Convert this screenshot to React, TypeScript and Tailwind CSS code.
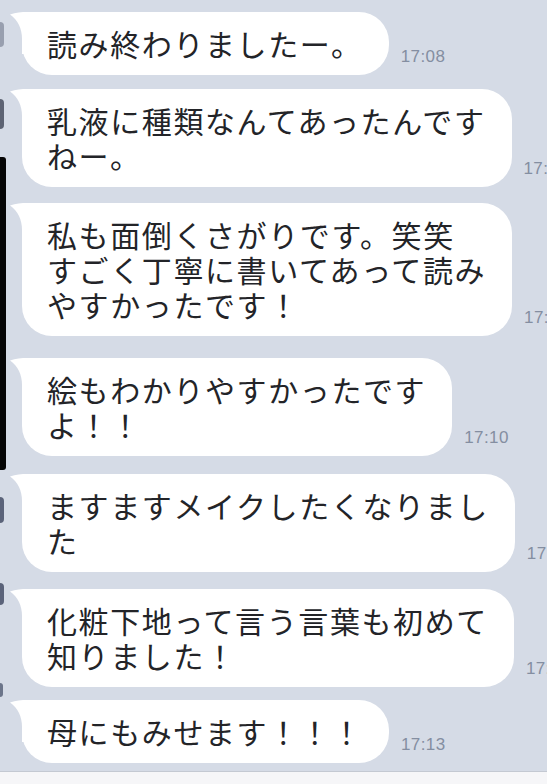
import React from "react";

type Message = {
  lines: string[];
  time: string;
  top: string;
};

const messages: Message[] = [
  { lines: ["読み終わりましたー。"], time: "17:08", top: "mt-0" },
  { lines: ["乳液に種類なんてあったんです", "ねー。"], time: "17:09", top: "mt-[14px]" },
  {
    lines: ["私も面倒くさがりです。笑笑", "すごく丁寧に書いてあって読み", "やすかったです！"],
    time: "17:09",
    top: "mt-[16px]",
  },
  { lines: ["絵もわかりやすかったです", "よ！！"], time: "17:10", top: "mt-[22px]" },
  { lines: ["ますますメイクしたくなりまし", "た"], time: "17:11", top: "mt-[18px]" },
  { lines: ["化粧下地って言う言葉も初めて", "知りました！"], time: "17:12", top: "mt-[17px]" },
  { lines: ["母にもみせます！！！"], time: "17:13", top: "mt-[13px]" },
];

// little horn at the top-left of each bubble
const Tail = () => (
  <svg
    className="absolute left-[-14px] top-[-2px] block"
    width="50"
    height="44"
    viewBox="0 0 50 44"
  >
    <path
      d="M2 4.5 C 8 2.4, 13 2, 20 2 L 50 2 L 50 44 L 14 44 L 14 29 C 14 19, 10 10, 2 4.5 Z"
      fill="#ffffff"
    />
  </svg>
);

const Bubble = ({ msg }: { msg: Message }) => {
  return (
    <div className={`${msg.top} flex items-end`}>
      <div className="relative shrink-0 rounded-[30px] bg-white py-[14px] pl-[25px] pr-[26px]">
        <Tail />
        <div className="relative whitespace-nowrap text-[30px] leading-[35px] tracking-[1.6px] text-[#232428] [font-family:'Noto_Sans_CJK_JP','Noto_Sans_CJK_SC',sans-serif]">
          {msg.lines.map((line, i) => (
            <div key={i}>{line}</div>
          ))}
        </div>
      </div>
      <span className="mb-[10px] ml-[12px] shrink-0 whitespace-nowrap text-[17px] leading-[17px] tracking-[0.4px] text-[#848ea1] [font-family:'Liberation_Sans',Arial,sans-serif]">
        {msg.time}
      </span>
    </div>
  );
};

const LeftStrip = () => (
  <div className="flex w-[6px] shrink-0 flex-col">
    <div className="h-[22px]" />
    <div className="h-[25px] w-[4px] rounded-r-full bg-[#5b6478] opacity-50" />
    <div className="h-[52px]" />
    <div className="h-[30px] w-[4px] rounded-r-full bg-[#2a3142] opacity-70" />
    <div className="h-[28px]" />
    <div className="h-[313px] w-[6px] rounded-r-[3px] bg-[#050505]" />
    <div className="h-[27px]" />
    <div className="h-[26px] w-[4px] rounded-r-full bg-[#26314c] opacity-70" />
    <div className="h-[60px]" />
    <div className="h-[22px] w-[4px] rounded-r-full bg-[#26314c] opacity-70" />
    <div className="h-[78px]" />
    <div className="h-[14px] w-[3px] rounded-r-full bg-[#26314c] opacity-60" />
  </div>
);

export default function App() {
  return (
    <div className="flex h-[784px] w-[547px] flex-col overflow-hidden bg-[#d5dbe6]">
      <div className="flex min-h-0 flex-1">
        <LeftStrip />
        <div className="flex flex-col pl-[16px] pt-[12px]">
          {messages.map((m, i) => (
            <Bubble key={i} msg={m} />
          ))}
        </div>
      </div>
      <div className="h-[13px] shrink-0 border-t border-[#c4c9d2] bg-[#f6f6f8]" />
    </div>
  );
}
